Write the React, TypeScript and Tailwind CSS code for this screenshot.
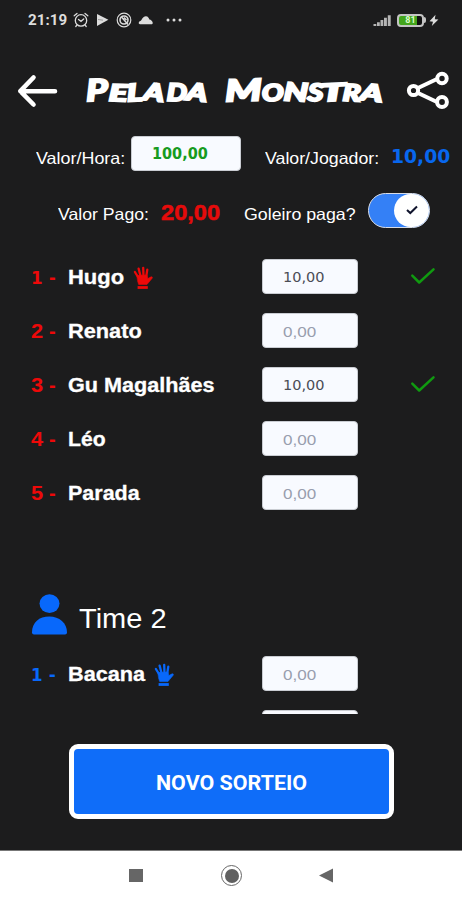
import { useLayoutEffect, useRef, type ReactNode } from "react";

/* Text stretched horizontally to fill the width of its box. */
function Fit({ className, children }: { className: string; children: ReactNode }) {
  const box = useRef<HTMLSpanElement>(null);
  const inner = useRef<HTMLSpanElement>(null);
  useLayoutEffect(() => {
    if (box.current && inner.current) {
      const k = box.current.clientWidth / inner.current.offsetWidth;
      inner.current.style.transform = `scaleX(${k})`;
    }
  });
  return (
    <span ref={box} className={`block shrink-0 whitespace-nowrap text-left ${className}`}>
      <span ref={inner} className="inline-block origin-left">{children}</span>
    </span>
  );
}

const sans = "font-['Liberation_Sans',sans-serif]";
const dejavu = "font-['DejaVu_Sans',sans-serif]";

function Glove({ className }: { className: string }) {
  return (
    <svg viewBox="0 0 20 24" className={`h-6 w-5 shrink-0 ${className}`} fill="none" stroke="currentColor" strokeLinecap="round">
      <path d="M5.6 12 1.9 6M7.8 11 5.6 2.6M10.5 11 10.2 1.8M13 12 14.3 3.6" strokeWidth="2.3" />
      <path d="M4.3 9.5 13.9 9 14.7 12.6 18.2 10.8Q19.8 10.6 19.2 12.2L15.4 16.8 13.9 18.6H5.7L4.6 15Z" fill="currentColor" strokeWidth=".6" strokeLinejoin="round" />
      <path d="M6 21.5h7.4" strokeWidth="2.8" strokeLinecap="square" />
    </svg>
  );
}

function StatusBar() {
  return (
    <div className="flex h-10 items-center pl-[28px] text-[#dcdcdc]">
      <Fit className="w-[39px] font-['Roboto',sans-serif] text-[14px] font-bold leading-10">21:19</Fit>
      <svg viewBox="0 0 16 16" className="ml-[6px] h-4 w-4" fill="none" stroke="currentColor" strokeWidth="1.3" strokeLinecap="round">
        <circle cx="8" cy="8.4" r="5.7" />
        <path d="M1.2 3.8 4 1.5M14.8 3.8 12 1.5M5.5 7.5 8 9.3 10.7 7M3.8 13.2 2.8 14.5M12.2 13.2l1 1.3" />
      </svg>
      <svg viewBox="0 0 13 14" className="ml-[7px] h-[14px] w-[13px]">
        <path d="M1 1 12.4 6.7 1 13Z" fill="currentColor" />
        <path d="M2 6.5 7 7.2" stroke="#999" strokeWidth="1" />
      </svg>
      <svg viewBox="0 0 16 16" className="ml-[7px] h-4 w-4" fill="none" stroke="currentColor">
        <circle cx="8" cy="8" r="6.8" strokeWidth="1.2" />
        <circle cx="8" cy="8" r="4" strokeWidth="1.6" />
        <path d="M5.5 5 12 12.5M8 5.5 10.5 8" strokeWidth="1.5" />
      </svg>
      <svg viewBox="0 0 16 10" className="ml-[6px] h-[10px] w-4" fill="currentColor">
        <path d="M2 9.2C.4 9.2.2 6.8 2.4 6 3.5 5.8 4.6 1.2 7.8 1.2c2.3 0 3.2 2.2 3.6 3.4C14.6 5 15.8 9.2 13.8 9.2Z" />
      </svg>
      <svg viewBox="0 0 16 4" className="ml-[12px] h-1 w-4" fill="currentColor">
        <circle cx="2" cy="2" r="1.5" /><circle cx="8" cy="2" r="1.5" /><circle cx="14" cy="2" r="1.5" />
      </svg>
      <svg viewBox="0 0 19 13" className="ml-[191px] h-[13px] w-[19px]" fill="#b5b5b5">
        <path d="M.5 12v-2h2.8v2ZM4 12V8.3h2.8V12ZM7.5 12V6h2.8v6ZM11 12V3.7h2.9V12ZM14.8 12V1.2h2.9V12Z" />
      </svg>
      <div className="ml-[5px] flex h-[13px] w-[27px] items-center justify-center rounded-[4px] border-2 border-[#c4c4c4] bg-[linear-gradient(90deg,#43a51c_78%,#111_78%)] font-['Roboto',sans-serif] text-[9px] font-bold leading-none text-[#d8ffc7]">81</div>
      <div className="h-[6px] w-[2px] rounded-r bg-[#c4c4c4]" />
      <svg viewBox="0 0 10 13" className="ml-[3px] h-[13px] w-[10px]" fill="currentColor">
        <path d="M6.5.8.5 7.3l3.5.4L2.8 12 9.4 5.6 5.8 5.2Z" />
      </svg>
    </div>
  );
}

const letters: [string, string][] = [
  ["P", "w-[21px] text-[30px] -rotate-2"],
  ["E", "ml-[2px] w-[18px] text-[23px] rotate-2"],
  ["L", "w-[16px] text-[24px] -rotate-3"],
  ["A", "ml-[1px] w-[21px] text-[24px] rotate-6"],
  ["D", "ml-[2px] w-[20px] text-[24px] rotate-1"],
  ["A", "w-[21px] text-[24px] rotate-6"],
  ["M", "ml-[17px] w-[36px] text-[30px] -rotate-2"],
  ["O", "ml-[1px] w-[21px] text-[23px]"],
  ["N", "ml-[1px] w-[24px] text-[25px] rotate-3"],
  ["S", "w-[15px] text-[24px] rotate-3"],
  ["T", "-ml-[2px] w-[23px] text-[24px] -rotate-3"],
  ["R", "-ml-[1px] w-[18px] text-[23px] rotate-3"],
  ["A", "w-[22px] text-[23px] rotate-6"],
];

function Header() {
  return (
    <div className="flex h-[96px] items-center pl-[17px]">
      <svg viewBox="0 0 42 34" className="mt-[5px] h-[34px] w-[42px] shrink-0" fill="none" stroke="white" strokeWidth="4.6" strokeLinecap="round" strokeLinejoin="round">
        <path d="M16.5 3.5 3.3 17.2 16.5 30.5M3.5 17.2H38" />
      </svg>
      <h1 className="ml-[27px] mt-[2px] flex h-[44px] w-[300px] shrink-0 items-baseline font-['Lato',sans-serif] font-bold italic leading-[44px] text-white [-webkit-text-stroke:2.2px_white]">
        {letters.map(([l, c], i) => (
          <Fit key={i} className={c}>{l}</Fit>
        ))}
      </h1>
      <svg viewBox="0 0 44 38" className="ml-[20px] mt-[3px] h-[38px] w-[44px] shrink-0" fill="none" stroke="white" strokeWidth="4">
        <path d="M12 17 31 8M12 22 31 31" />
        <circle cx="7.5" cy="19.5" r="4.6" /><circle cx="36" cy="7.5" r="4.7" /><circle cx="36" cy="31" r="4.9" />
      </svg>
    </div>
  );
}

interface Player { name: string; width: string; paid?: boolean; keeper?: boolean }
const teamOne: Player[] = [
  { name: "Hugo", width: "w-[56px]", paid: true, keeper: true },
  { name: "Renato", width: "w-[74px]" },
  { name: "Gu Magalhães", width: "w-[147px]", paid: true },
  { name: "Léo", width: "w-[38px]" },
  { name: "Parada", width: "w-[72px]" },
];

const field = "h-[35px] w-[96px] shrink-0 rounded-[4px] border border-[#c9ccd2] bg-[#f8faff]";

function PlayerRow({ player, n, color }: { player: Player; n: number; color: string }) {
  return (
    <div className="flex h-[54px] shrink-0 items-start pl-[31px]">
      <div className={`flex w-[231px] text-[20px] font-bold leading-[37px] ${sans}`}>
        <span className={`flex w-[37px] ${color}`}>
          <Fit className={`w-[12px] ${n === 1 ? `${dejavu} text-[18px]` : ""}`}>{n}</Fit>
          <Fit className="ml-[6px] w-[7px]">-</Fit>
        </span>
        <Fit className={`text-white [-webkit-text-stroke:0.3px_white] ${player.width}`}>{player.name}</Fit>
        {player.keeper && <Glove className={`ml-[9px] mt-[7px] ${color}`} />}
      </div>
      <div className={`pl-[20px] leading-[35px] ${field}`}>
        {player.paid
          ? <Fit className={`w-[42px] text-[14.5px] text-[#4b4c55] ${dejavu}`}>10,00</Fit>
          : <Fit className={`w-[33px] text-[15px] text-[#989eae] ${sans}`}>0,00</Fit>}
      </div>
      {player.paid && (
        <svg viewBox="0 0 26 18" className="ml-[52px] mt-[8px] h-[18px] w-[26px]" fill="none" stroke="#109a10" strokeWidth="2.5" strokeLinecap="round" strokeLinejoin="round">
          <path d="M2.3 8.7 9.2 15.5 23.5 2.3" />
        </svg>
      )}
    </div>
  );
}

export default function App() {
  return (
    <div className={`flex h-[900px] w-[462px] flex-col overflow-hidden bg-[#1c1c1d] ${sans}`}>
      <StatusBar />
      <Header />
      <div className="flex h-[35px] shrink-0 items-center pl-[36px] text-white">
        <Fit className="mt-[9px] w-[89px] text-[16.5px]">Valor/Hora:</Fit>
        <div className="ml-[6px] h-[35px] w-[110px] shrink-0 rounded-[4px] border border-[#c9ccd2] bg-[#f8faff] pl-[20px] leading-[34px]">
          <Fit className={`w-[56px] text-[16px] font-bold text-[#169b20] ${dejavu}`}>100,00</Fit>
        </div>
        <Fit className="ml-[24px] mt-[9px] w-[114px] text-[16.5px]">Valor/Jogador:</Fit>
        <Fit className={`ml-[12px] mt-[5px] w-[59px] text-[20px] font-bold text-[#0867ee] ${dejavu}`}>10,00</Fit>
      </div>
      <div className="mt-[21px] flex h-[36px] shrink-0 items-center pl-[58px] text-white">
        <Fit className="mt-[9px] w-[91px] text-[16.5px]">Valor Pago:</Fit>
        <Fit className="ml-[12px] mt-[5px] w-[59px] text-[22px] font-bold text-[#e50b0b] [-webkit-text-stroke:0.5px_#e50b0b]">20,00</Fit>
        <Fit className="ml-[24px] mt-[9px] w-[112px] text-[16.5px]">Goleiro paga?</Fit>
        <div className="ml-[12px] flex h-[35px] w-[62px] shrink-0 justify-end rounded-full border border-[#d8dce5] bg-[#3480f6]">
          <div className="flex h-[33px] w-[35px] items-center justify-center rounded-full bg-white">
            <svg viewBox="0 0 12 10" className="h-[10px] w-[12px]" fill="none" stroke="#10142d" strokeWidth="2"><path d="M1 4.9 4.3 8 11 1.5" /></svg>
          </div>
        </div>
      </div>
      <div className="mt-[31px] flex h-[455px] shrink-0 flex-col overflow-hidden">
        {teamOne.map((p, i) => <PlayerRow key={p.name} player={p} n={i + 1} color="text-[#ed0909]" />)}
        <div className="mt-[65px] flex h-[42px] shrink-0 items-center pl-[31px] text-white">
          <svg viewBox="0 0 36 42" className="h-[42px] w-[36px]" fill="#0868fb">
            <ellipse cx="18.5" cy="9.6" rx="10" ry="9.3" />
            <path d="M1 38.5C1 28.2 8.2 22.5 18.3 22.5S36 29 36 38.5q0 2-2 2H3q-2 0-2-2Z" />
          </svg>
          <Fit className="ml-[12px] mt-[7px] w-[88px] text-[28px]">Time 2</Fit>
        </div>
        <div className="mt-[20px]">
          <PlayerRow player={{ name: "Bacana", width: "w-[77px]", keeper: true }} n={1} color="text-[#0868fb]" />
          <div className={`ml-[262px] ${field}`} />
        </div>
      </div>
      <button className="ml-[69px] mt-[30px] flex h-[75px] w-[325px] shrink-0 items-center justify-center rounded-[9px] border-[5px] border-white bg-[#0f6df9] text-white">
        <Fit className="w-[151px] pt-[2px] font-['Roboto',sans-serif] text-[20px] font-bold">NOVO SORTEIO</Fit>
      </button>
      <div className="mt-auto flex h-[50px] shrink-0 items-center border-t border-[#777] bg-white pl-[129px]">
        <div className="h-[13px] w-[14px] bg-[#666]" />
        <div className="ml-[78px] flex h-[21px] w-[21px] items-center justify-center rounded-full border border-[#666]">
          <div className="h-[14px] w-[14px] rounded-full bg-[#606060]" />
        </div>
        <svg viewBox="0 0 14 15" className="ml-[77px] h-[15px] w-[14px]"><path d="M0 7.5 14 .5v14Z" fill="#666" /></svg>
      </div>
    </div>
  );
}
